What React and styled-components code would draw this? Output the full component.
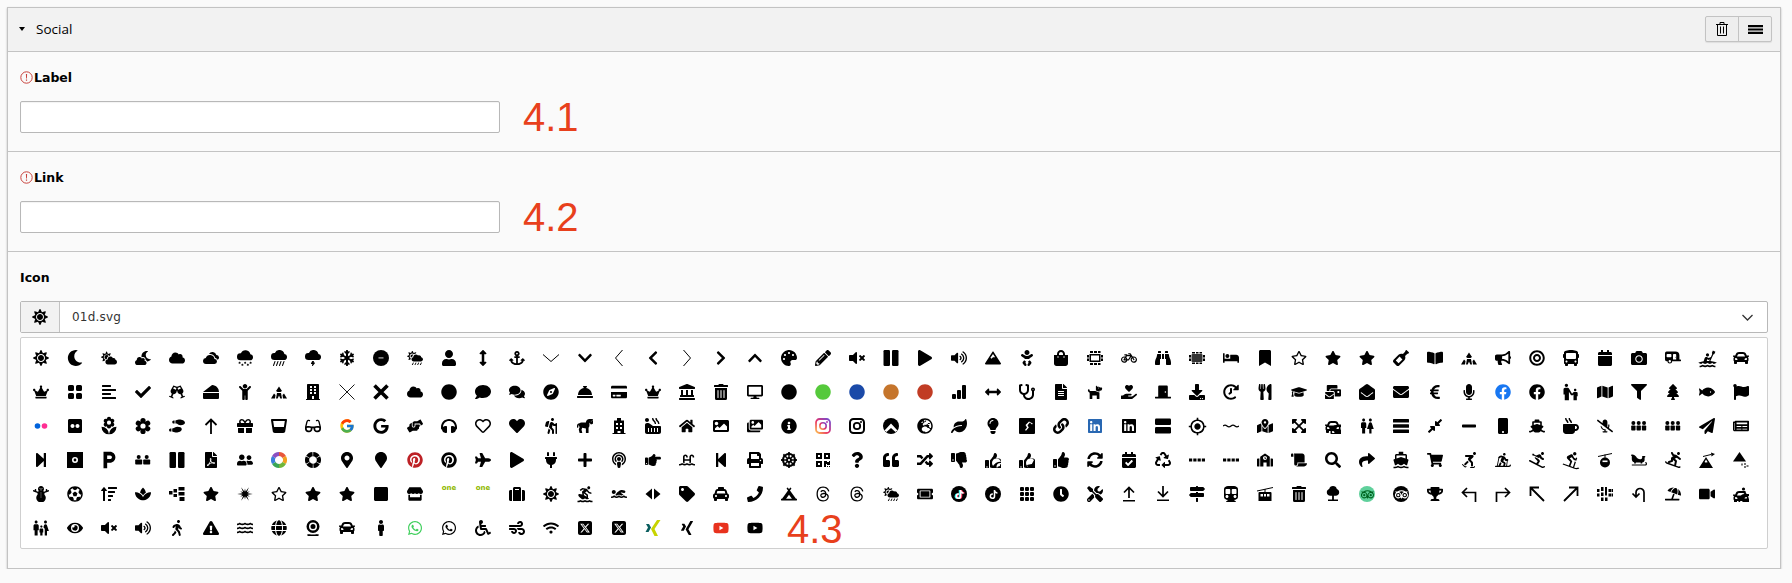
import React from "react";
import styled, { createGlobalStyle } from "styled-components";
import {
	FaAlignLeft, FaAnchor, FaArrowsAltH, FaArrowsAltV, FaBaby, FaBed, FaBicycle, FaBinoculars, FaBookmark,
	FaBookOpen, FaBuilding, FaBullhorn, FaBullseye, FaBus, FaCalendar, FaCalendarCheck, FaCamera, FaCampground,
	FaCar, FaCaravan, FaCheck, FaCheese, FaChevronDown, FaChevronLeft, FaChevronRight, FaChevronUp, FaChild, FaCircle,
	FaClock, FaCloud, FaCloudMoon, FaCloudSun, FaCloudSunRain, FaComment, FaComments, FaCompass, FaCompressAlt,
	FaConciergeBell, FaCreditCard, FaCrown, FaDesktop, FaDharmachakra, FaDog, FaDoorClosed, FaDownload,
	FaEnvelope, FaEnvelopeOpen, FaEuroSign, FaExclamationTriangle, FaExpandArrowsAlt, FaEye, FaFacebook, FaFileAlt,
	FaFilePdf, FaFilter, FaFish, FaFlag, FaFlickr, FaFutbol, FaGift, FaGlassCheers, FaGlasses, FaGlassWhiskey, FaGlobe,
	FaGlobeEurope, FaGoogle, FaGraduationCap, FaHandHoldingHeart, FaHandPointRight, FaHandsHelping, FaHeadphones,
	FaHeart, FaHiking, FaHistory, FaHome, FaHorse, FaHotTub, FaImage, FaImages, FaInfoCircle, FaLandmark,
	FaLeaf, FaLightbulb, FaLink, FaLinkedin, FaMailBulk, FaMale, FaMap, FaMapMarkedAlt, FaMapMarker, FaMapMarkerAlt,
	FaMapSigns, FaMicrophone, FaMicrophoneSlash, FaMinus, FaMobile, FaMoon, FaMountain, FaMugHot, FaNewspaper,
	FaPalette, FaPaperPlane, FaPencilAlt, FaPhone, FaPinterest, FaPlane, FaPlay, FaPlug, FaPlus, FaPodcast,
	FaPrint, FaQrcode, FaQuestion, FaQuoteLeft, FaRandom, FaRecycle, FaRegHeart, FaRegStar, FaSchool, FaScroll,
	FaSearch, FaShare, FaShip, FaShoePrints, FaShoppingBag, FaShoppingCart, FaSkating, FaSkiing, FaSkiingNordic,
	FaSleigh, FaSnowboarding, FaSnowflake, FaSnowman, FaSortAmountUp, FaSpa, FaSquare, FaStar, FaStepBackward,
	FaStepForward, FaStethoscope, FaStore, FaSubway, FaSuitcase, FaSun, FaSwimmer, FaSwimmingPool, FaSyncAlt, FaTag,
	FaTaxi, FaThumbsDown, FaThumbsUp, FaTicketAlt, FaTiktok, FaTools, FaTrashAlt, FaTree, FaTripadvisor,
	FaTrophy, FaUmbrellaBeach, FaUser, FaUserFriends, FaUtensils, FaVideo, FaVolumeMute, FaVolumeUp, FaWalking, FaWater,
	FaWhatsapp, FaWheelchair, FaWifi, FaWind, FaWineBottle, FaXing, FaYoutube,
} from "react-icons/fa";
import { FaThreads, FaSquareXTwitter } from "react-icons/fa6";
import { FcGoogle } from "react-icons/fc";
import { BsBarChartFill, BsCloudLightningFill, BsCloudRainHeavyFill, BsCloudsFill, BsCloudSnowFill, BsGrid3X3GapFill, BsGridFill } from "react-icons/bs";
import { MdDirectionsBoat, MdDownhillSkiing, MdEscalatorWarning, MdFamilyRestroom, MdGpsFixed, MdKayaking, MdLocalFlorist, MdLocalParking, MdSurfing, MdWc } from "react-icons/md";

const GlobalStyle = createGlobalStyle`
	html, body {
		margin: 0;
		background: #fafafa;
	}
	#root {
		padding: 7px 11px 0 7px;
	}
`;

const Panel = styled.div`
	background: #fafafa;
	border: 1px solid #c3c3c3;
	box-shadow: 0 1px 2px rgba(0, 0, 0, 0.25);
	font-family: "DejaVu Sans", Verdana, sans-serif;
	color: #000;
`;

const PanelHeader = styled.div`
	box-sizing: border-box;
	display: flex;
	align-items: center;
	height: 44px;
	padding: 0 8px 1px 11px;
	background: #f2f2f2;
	border-bottom: 1px solid #c3c3c3;
`;

const Caret = styled.span`
	width: 0;
	height: 0;
	border-left: 3.5px solid transparent;
	border-right: 3.5px solid transparent;
	border-top: 4px solid #000;
	margin-right: 11px;
`;

const Title = styled.span`
	flex: 1;
	font-family: "Open Sans", sans-serif;
	font-size: 13.5px;
`;

const ButtonGroup = styled.div`
	display: flex;
	height: 24px;
	border: 1px solid #c3c3c3;
	border-radius: 2px;
	background: #eeeeee;
	box-shadow: 0 1px 1px rgba(0, 0, 0, 0.08);
`;

const GroupButton = styled.div`
	display: flex;
	align-items: center;
	justify-content: center;
	width: 32px;
	border-left: ${({ $first }) => ($first ? "none" : "1px solid #c3c3c3")};
`;

const Section = styled.div`
	padding: 16px 12px ${({ $last }) => ($last ? "19px" : "18px")};
	border-bottom: ${({ $last }) => ($last ? "none" : "1px solid #c3c3c3")};
`;

const FieldLabel = styled.div`
	display: flex;
	align-items: center;
	height: 18px;
	margin-bottom: 15px;
	font-size: 12.5px;
	font-weight: bold;
`;

const WarnIcon = styled.svg`
	width: 13px;
	height: 13px;
	margin-right: 1px;
`;

const FieldRow = styled.div`
	display: flex;
	align-items: center;
	gap: 23px;
	height: 32px;
`;

const TextInput = styled.input`
	box-sizing: border-box;
	width: 480px;
	height: 32px;
	background: #fff;
	border: 1px solid #b8b8b8;
	border-radius: 2px;
	box-shadow: inset 0 1px 1px rgba(0, 0, 0, 0.05);
`;

const Annotation = styled.span`
	font-family: "Liberation Sans", Arial, sans-serif;
	font-size: 40px;
	line-height: 34px;
	color: #e8401c;
`;

const SelectBox = styled.div`
	display: flex;
	align-items: stretch;
	height: 30px;
	background: #fff;
	border: 1px solid #b8b8b8;
	border-radius: 2px;
`;

const SelectAddon = styled.div`
	display: flex;
	align-items: center;
	justify-content: center;
	width: 38px;
	font-size: 16px;
	background: #f2f2f2;
	border-right: 1px solid #c3c3c3;
`;

const SelectValue = styled.div`
	flex: 1;
	display: flex;
	align-items: center;
	padding-left: 12px;
	font-size: 12px;
	letter-spacing: 0.2px;
	color: #333;
`;

const SelectArrow = styled.div`
	display: flex;
	align-items: center;
	padding-right: 14px;
`;

const IconGrid = styled.div`
	display: flex;
	flex-wrap: wrap;
	margin-top: 4px;
	padding: 3px 3px 2px;
	background: #fff;
	border: 1px solid #cfcfcf;
	border-radius: 2px;
`;

const IconTile = styled.div`
	display: flex;
	align-items: center;
	justify-content: center;
	width: 34px;
	height: 34px;
	font-size: 16px;
	color: #000;
	svg {
		flex: none;
	}
`;

const GridNote = styled(Annotation)`
	height: 34px;
	margin-left: 15px;
	margin-top: 1px;
`;

const Round = styled.span`
	display: flex;
	align-items: center;
	justify-content: center;
	width: 16px;
	height: 16px;
	border-radius: 50%;
	font-size: ${({ $size }) => $size || 10}px;
	background: ${({ $bg }) => $bg};
	color: ${({ $fg }) => $fg};
`;

const TikTokMark = styled(FaTiktok)`
	filter: ${({ $tinted }) => ($tinted ? "drop-shadow(-1px 0 0 #25f4ee) drop-shadow(1px 0 0 #fe2c55)" : "none")};
`;

const OneMark = styled.span`
	margin-top: -12px;
	font-family: "DejaVu Sans", sans-serif;
	font-size: 7px;
	font-weight: bold;
	color: #8fb800;
`;

const GreenDot = styled(FaCircle)`color: #55c93b;`;
const BlueDot = styled(FaCircle)`color: #1b4aa8;`;
const OrangeDot = styled(FaCircle)`color: #c5752c;`;
const RedDot = styled(FaCircle)`color: #c13c24;`;
const FacebookBlue = styled(FaFacebook)`color: #1877f2;`;
const LinkedinBlue = styled(FaLinkedin)`color: #2867b2;`;
const PinterestRed = styled(FaPinterest)`color: #bd2126;`;
const WhatsappGreen = styled(FaWhatsapp)`color: #3fcf5c;`;
const YoutubeRed = styled(FaYoutube)`color: #e8321e;`;
const ClockArrow = styled(FaHistory)`transform: scaleX(-1);`;

// the material icons carry padding in their box, so they are drawn a bit larger
const scaled = (Icon, px = 20) => styled(Icon)`font-size: ${px}px;`;
const Florist = scaled(MdLocalFlorist);
const GpsFixed = scaled(MdGpsFixed, 19);
const Surfing = scaled(MdSurfing, 18);
const Jumper = scaled(MdDownhillSkiing);
const Boat = scaled(MdDirectionsBoat, 18);
const Restroom = scaled(MdWc, 18);
const ParentChild = scaled(MdEscalatorWarning, 20);
const Family = scaled(MdFamilyRestroom, 18);
const Parking = scaled(MdLocalParking, 22);
const Kayak = scaled(MdKayaking, 19);

const Svg = ({ children, ...rest }) => (
	<svg viewBox="0 0 16 16" width="1em" height="1em" fill="currentColor" {...rest}>
		{children}
	</svg>
);

const Line = ({ d, w = 1.6 }) => <path d={d} fill="none" stroke="currentColor" strokeWidth={w} />;

const arc = (r0, r1, a0, a1) => {
	const pt = (r, a) => `${(8 + r * Math.cos((a * Math.PI) / 180)).toFixed(2)} ${(8 + r * Math.sin((a * Math.PI) / 180)).toFixed(2)}`;
	return `M${pt(r0, a0)}A${r0} ${r0} 0 0 1 ${pt(r0, a1)}L${pt(r1, a1)}A${r1} ${r1} 0 0 0 ${pt(r1, a0)}Z`;
};

const burstPoints = Array.from({ length: 24 }, (_, i) => {
	const r = i % 2 ? 2.6 : i % 4 ? 5.5 : 7.8;
	const a = (i * Math.PI) / 12;
	return `${(8 + r * Math.cos(a)).toFixed(2)},${(8 + r * Math.sin(a)).toFixed(2)}`;
}).join(" ");

const stroked = (d, w) => () => (
	<Svg>
		<Line d={d} w={w} />
	</Svg>
);

const ThinDown = stroked("M0 4.5 8 11.5 16 4.5", 1);
const ThinLeft = stroked("M11.5 0 4.5 8 11.5 16", 1);
const ThinRight = stroked("M4.5 0 11.5 8 4.5 16", 1);
const ThinX = stroked("M.5.5 15.5 15.5M15.5.5.5 15.5", 0.9);
const BoldX = stroked("M1.5 1.5 14.5 14.5M14.5 1.5 1.5 14.5", 3.6);
const ArrowUpThin = stroked("M8 16V1.5M2.5 7 8 1.5 13.5 7", 1.8);
const ArrowUpLeft = stroked("M15 15 1.5 1.5M1.5 10V1.5H10", 1.8);
const ArrowUpRight = stroked("M1 15 14.5 1.5M14.5 10V1.5H6", 1.8);
const TurnLeft = stroked("M14.5 16V6.5H1.5M6 2 1.5 6.5 6 11", 1.7);
const TurnRight = stroked("M1.5 16V6.5h13M10 2l4.5 4.5L10 11", 1.7);
const UTurn = stroked("M13 16V6.5a4 4 0 0 0-8 0V11M1.5 7.5 5 11l3.5-3.5", 1.7);
const WaveLine = stroked("M0 8c1.3-1.2 2.7-1.2 4 0s2.700 1.200 4 0 2.700-1.200 4 0 2.700 1.200 4 0", 1.2);

const Disc360 = () => (
	<Svg>
		<circle cx="8" cy="8" r="8" />
		<rect x="5.5" y="7.3" width="5" height="1.2" fill="#fff" opacity="0.7" />
	</Svg>
);

const ChipTable = () => (
	<Svg>
		<path fillRule="evenodd" d="M2.5 4h11v8h-11ZM4 5.5v5h8v-5Z" />
		<path d="M3 1h3v2H3ZM7 1h3v2H7ZM11 1h2.5v2H11ZM3 13h3v2H3ZM7 13h3v2H7ZM11 13h2.5v2H11ZM0 5h2v2.5H0ZM0 8.5h2V11H0ZM14 5h2v2.5h-2ZM14 8.5h2V11h-2Z" />
	</Svg>
);

const ChipTableFilled = () => (
	<Svg>
		<rect x="2.5" y="4" width="11" height="8" rx="1" opacity="0.8" />
		<path d="M3 2h3v1.4H3ZM7 2h2.5v1.4H7ZM10.5 2H13v1.4h-2.5ZM3 12.6h3V14H3ZM7 12.6h2.5V14H7ZM10.5 12.6H13V14h-2.5ZM0 5h2v2.5H0ZM0 8.5h2V11H0ZM14 5h2v2.5h-2ZM14 8.5h2V11h-2Z" />
	</Svg>
);

const Bungalows = () => (
	<Svg>
		<path d="M8 2.5 11 7l-1.500 1h-3L5 7ZM6 9h4l1 5.500H9.300L8 11.500 6.700 14.500H5ZM3 9.500 4.500 11 4 14.500H0ZM13 9.500l3 5h-4L11.500 11Z" />
	</Svg>
);

const FlickrDots = () => (
	<Svg>
		<circle cx="4.5" cy="8" r="2.8" fill="#0063dc" />
		<circle cx="11.5" cy="8" r="2.8" fill="#ff2e92" />
	</Svg>
);

const HexFlower = () => (
	<Svg>
		{[0, 60, 120, 180, 240, 300].map((a) => (
			<circle key={a} cx="8" cy="2.6" r="2.6" transform={`rotate(${a} 8 8)`} />
		))}
		<circle cx="8" cy="8" r="5" />
		<circle cx="8" cy="8" r="2.6" fill="#fff" />
	</Svg>
);

const PeakCircle = () => (
	<Svg>
		<circle cx="8" cy="8" r="8" />
		<path d="M1.500 12.500 8 5.500l6.500 7-2 1.500L8 10l-4.500 4Z" fill="#fff" />
	</Svg>
);

const CrackSquare = () => (
	<Svg>
		<path fillRule="evenodd" d="M1 0h14a1 1 0 0 1 1 1v14a1 1 0 0 1-1 1H1a1 1 0 0 1-1-1V1a1 1 0 0 1 1-1Zm9 3.500L6.500 7 8 9.500 6 12l1 .8 2.800-3.300L8.500 7.200l2.300-2.800 2.200 2 .8-.9Z" />
	</Svg>
);

const TowerHotel = () => (
	<Svg>
		<path fillRule="evenodd" d="M6 0h4v2.500h3V15h1.500v1h-13v-1H3V2.500h3ZM5 5v2h2V5Zm4 0v2h2V5ZM5 9v2h2V9Zm4 0v2h2V9Zm-2.500 4v2h3v-2Z" />
	</Svg>
);

const TwoBarsH = () => (
	<Svg>
		<rect x="0" y="0.5" width="16" height="6.5" rx="1.2" />
		<rect x="0" y="9" width="16" height="6.5" rx="1.2" />
	</Svg>
);

const TwoBarsV = () => (
	<Svg>
		<rect x="0.5" y="0" width="6.5" height="16" rx="1.2" />
		<rect x="9" y="0" width="6.5" height="16" rx="1.2" />
	</Svg>
);

const ThreeBars = () => (
	<Svg>
		<rect x="0" y="1" width="16" height="3.4" rx="0.5" />
		<rect x="0" y="6.3" width="16" height="3.4" rx="0.5" />
		<rect x="0" y="11.6" width="16" height="3.4" rx="0.5" />
	</Svg>
);

const CarPair = () => (
	<Svg>
		<FaCar x="0" y="1" width="8" height="8" />
		<FaCar x="5" y="5" width="11" height="11" />
	</Svg>
);

const CarPeople = () => (
	<Svg>
		<FaCar x="0" y="3" width="7" height="7" />
		<FaCar x="5" y="6" width="11" height="11" />
		<circle cx="10.5" cy="3" r="1.6" />
		<path d="M8.500 5h4v1.200h-4Z" />
	</Svg>
);

const People = ({ count, top }) => {
	const step = 16 / count;
	return (
		<Svg>
			{Array.from({ length: count }, (_, i) => (
				<g key={i} transform={`translate(${i * step} ${top})`}>
					<circle cx={step / 2 - 0.3} cy="0" r="2" />
					<rect x="0.2" y="2.5" width={step - 1} height="5" rx="0.8" />
				</g>
			))}
		</Svg>
	);
};
const PeopleThree = () => <People count={3} top={5} />;
const PeopleTwo = () => <People count={2} top={5} />;

const OBox = () => (
	<Svg>
		<path fillRule="evenodd" d="M0 0h16v16H0ZM8 5a3 3 0 1 0 0 6 3 3 0 0 0 0-6Zm0 1.600a1.400 1.400 0 1 1 0 2.800 1.400 1.400 0 0 1 0-2.800Z" />
	</Svg>
);

const picasaColors = ["#e8563a", "#f2a01e", "#6fb63a", "#3aa655", "#3b7fd9", "#8a4fc1"];

const PicasaColor = () => (
	<Svg>
		{picasaColors.map((c, i) => (
			<path key={c} d={arc(8, 4, -90 + i * 60, -30 + i * 60)} fill={c} />
		))}
	</Svg>
);

const PicasaBlack = () => (
	<Svg>
		{picasaColors.map((c, i) => (
			<path key={c} d={arc(8, 3.8, -88 + i * 60, -34 + i * 60)} />
		))}
	</Svg>
);

const DashLine = () => (
	<Svg>
		<path d="M0 6.500h3.200v3H0ZM4.300 6.500h3.200v3H4.300ZM8.600 6.500h3.200v3H8.600ZM12.800 6.500H16v3h-3.200Z" />
	</Svg>
);

const SkiGondola = () => (
	<Svg>
		<Line w={1} d="M1 4.500 15 1.500" />
		<path d="M7.500 2.500h1V6h-1Z" />
		<circle cx="8" cy="10.5" r="5" />
		<rect x="5.5" y="8.5" width="5" height="1.6" fill="#fff" />
	</Svg>
);

const CableCar = () => (
	<Svg>
		<Line w={1} d="M0 5 16 1.500" />
		<path d="M7.500 3h1v3h-1Z" />
		<path fillRule="evenodd" d="M2.500 6h11a1 1 0 0 1 1 1v8h-13V7a1 1 0 0 1 1-1ZM3.500 8v2.500h2.500V8ZM7 8v2.500h2V8Zm3 0v2.500h2.500V8Z" />
	</Svg>
);

const Blocks = () => (
	<Svg>
		<path d="M0 5h3.500v3.500H0ZM4.500 3h3.500v3.500H4.500ZM4.500 8h3.500v3H4.500ZM9.500 1h6v3.500h-6ZM9.500 6h6v3.500h-6ZM10.500 11h5v4h-5Z" />
	</Svg>
);

const Burst = () => (
	<Svg>
		<polygon points={burstPoints} />
	</Svg>
);

const CaretsLR = () => (
	<Svg>
		<path d="M7 2.500v11L.5 8ZM9 2.500 15.500 8 9 13.500Z" />
	</Svg>
);

const UploadLine = () => (
	<Svg>
		<Line w={1.7} d="M8 12V1.500M3 6.500l5-5 5 5" />
		<path d="M2 14h12v1.500H2Z" />
	</Svg>
);

const DownloadLine = () => (
	<Svg>
		<Line w={1.7} d="M8 0v10.500M3 5.500l5 5 5-5" />
		<path d="M2 13.500h12V15H2Z" />
	</Svg>
);

const RoundTree = () => (
	<Svg>
		<path d="M8 0c2 0 3.500 1.300 3.800 3 1.400.4 2.400 1.600 2.400 3.200 0 2-1.600 3.500-3.500 3.500H8.900v3.800H13V15H3v-1.500h4.100V9.700H5.300c-1.900 0-3.500-1.500-3.500-3.500C1.800 4.600 2.800 3.400 4.200 3 4.500 1.300 6 0 8 0Z" />
	</Svg>
);

const DotGrid = () => (
	<Svg>
		<path d="M0 3h2.500v3H0ZM0 7.500h2.500v3H0ZM4 1h2.500v4H4ZM4 6.500h2.500v3.500H4ZM4 11.500h2.500V15H4ZM8 1h2v8.500H8ZM8 11.500h2.500V15H8ZM11.500 3H14v3h-2.500ZM11.500 7.500H14v3h-2.500ZM14.500 3H16v3h-1.500ZM14.500 7.500H16v3h-1.500Z" />
	</Svg>
);

const Webcam = () => (
	<Svg>
		<path fillRule="evenodd" d="M8 0a6.500 6.500 0 1 1 0 13A6.500 6.500 0 0 1 8 0Zm0 2.500a4 4 0 1 0 0 8 4 4 0 0 0 0-8Zm0 1.500a2.500 2.500 0 1 1 0 5 2.500 2.500 0 0 1 0-5Z" />
		<path d="M2.500 14c1 .3 3 .5 5.500.5s4.500-.2 5.500-.5v2h-11Z" />
	</Svg>
);

const MountainArrow = () => (
	<Svg>
		<path fillRule="evenodd" d="M7 5 14 16H0ZM7 7.500 5.500 10l1 .8.500-.8.800.8.800-.8Z" />
		<Line w={1} d="M4 4.500 12 2.500" />
		<path d="M12 .5 16 2l-3.500 2.500Z" />
	</Svg>
);

const MountainDots = () => (
	<Svg>
		<path d="M6.500 0 13 9.500H0Z" />
		<path d="M8 11.500h2v2H8ZM11 11h2v2h-2ZM13.500 13h2v2h-2ZM11 14h2v2h-2Z" opacity="0.55" />
	</Svg>
);

const ThumbEye = () => (
	<Svg>
		<FaThumbsUp x="0" y="1" width="12" height="12" />
		<circle cx="11.5" cy="11" r="4.5" fill="#fff" />
		<FaEye x="7.5" y="7" width="8" height="8" />
	</Svg>
);

const ThumbStar = () => (
	<Svg>
		<FaThumbsUp x="0" y="1" width="12" height="12" />
		<circle cx="11.5" cy="11" r="4.5" fill="#fff" />
		<FaStar x="7.5" y="7" width="8" height="8" />
	</Svg>
);

const InstagramBlack = () => (
	<Svg>
		<rect x="1" y="1" width="14" height="14" rx="3.5" fill="none" stroke="#000" strokeWidth="2" />
		<circle cx="8" cy="8" r="3.2" fill="none" stroke="#000" strokeWidth="1.8" />
		<circle cx="12" cy="4" r="1" />
	</Svg>
);

const InstagramColor = () => (
	<Svg>
		<defs>
			<linearGradient id="ig" x1="0" y1="1" x2="1" y2="0">
				<stop offset="0" stopColor="#fdc04f" />
				<stop offset="0.45" stopColor="#e8336a" />
				<stop offset="1" stopColor="#6a4fd8" />
			</linearGradient>
		</defs>
		<rect x="1" y="1" width="14" height="14" rx="3.5" fill="none" stroke="url(#ig)" strokeWidth="1.8" />
		<circle cx="8" cy="8" r="3.2" fill="none" stroke="url(#ig)" strokeWidth="1.6" />
		<circle cx="12" cy="4" r="1" fill="#b53fb0" />
	</Svg>
);

const XingColor = () => (
	<Svg>
		<path d="M1 4h3l2 3.500L3.500 12h-3L3 7.500Z" fill="#0a5d5e" />
		<path d="M12 0h3.500L9.500 9l3.500 7H9.500L6 9Z" fill="#c8d400" />
	</Svg>
);

const TikTokColor = () => (
	<Round $bg="#000" $fg="#fff" $size={9}>
		<TikTokMark $tinted />
	</Round>
);
const TikTokBlack = () => (
	<Round $bg="#000" $fg="#fff" $size={9}>
		<TikTokMark />
	</Round>
);
const TripGreen = () => (
	<Round $bg="#5fd09b" $fg="#062" $size={13}>
		<FaTripadvisor />
	</Round>
);
const TripBlack = () => (
	<Round $bg="#000" $fg="#fff" $size={13}>
		<FaTripadvisor />
	</Round>
);
const One = () => <OneMark>one</OneMark>;

const ICONS = [
	// row 1
	FaSun, FaMoon, FaCloudSun, FaCloudMoon, FaCloud, BsCloudsFill, BsCloudSnowFill, BsCloudRainHeavyFill, BsCloudLightningFill,
	FaSnowflake, Disc360, FaCloudSunRain, FaUser, FaArrowsAltV, FaAnchor, ThinDown, FaChevronDown, ThinLeft,
	FaChevronLeft, ThinRight, FaChevronRight, FaChevronUp, FaPalette, FaPencilAlt, FaVolumeMute, TwoBarsV, FaPlay,
	FaVolumeUp, FaMountain, FaBaby, FaShoppingBag, ChipTable, FaBicycle, FaBinoculars, ChipTableFilled, FaBed, FaBookmark,
	FaRegStar, FaStar, FaStar, FaWineBottle, FaBookOpen, Bungalows, FaBullhorn, FaBullseye, FaBus, FaCalendar, FaCamera,
	FaCaravan, Kayak, FaCar,
	// row 2
	FaCrown, BsGridFill, FaAlignLeft, FaCheck, FaGlassCheers, FaCheese, FaChild, Bungalows, FaBuilding, ThinX, BoldX,
	FaCloud, FaCircle, FaComment, FaComments, FaCompass, FaConciergeBell, FaCreditCard, FaCrown, FaLandmark, FaTrashAlt,
	FaDesktop, FaCircle, GreenDot, BlueDot, OrangeDot, RedDot, BsBarChartFill, FaArrowsAltH, FaStethoscope, FaFileAlt, FaDog,
	FaHandHoldingHeart, FaDoorClosed, FaDownload, ClockArrow, FaUtensils, FaGraduationCap, FaMailBulk, FaEnvelopeOpen,
	FaEnvelope, FaEuroSign, FaMicrophone, FacebookBlue, FaFacebook, ParentChild, FaMap, FaFilter, FaTree, FaFish, FaFlag,
	// row 3
	FlickrDots, FaFlickr, Florist, HexFlower, FaShoePrints, ArrowUpThin, FaGift, FaGlassWhiskey, FaGlasses, FcGoogle,
	FaGoogle, FaHandsHelping, FaHeadphones, FaRegHeart, FaHeart, FaHiking, FaHorse, TowerHotel, FaHotTub, FaHome, FaImage, FaImages,
	FaInfoCircle, InstagramColor, InstagramBlack, PeakCircle, FaGlobeEurope, FaLeaf, FaLightbulb, CrackSquare, FaLink, LinkedinBlue,
	FaLinkedin, TwoBarsH, GpsFixed, WaveLine, FaMapMarkedAlt, FaExpandArrowsAlt, CarPair, Restroom, ThreeBars, FaCompressAlt, FaMinus,
	FaMobile, FaShip, FaMugHot, FaMicrophoneSlash, PeopleThree, PeopleThree, FaPaperPlane, FaNewspaper,
	// row 4
	FaStepForward, OBox, Parking, PeopleTwo, TwoBarsV, FaFilePdf, FaUserFriends, PicasaColor, PicasaBlack, FaMapMarkerAlt,
	FaMapMarker, PinterestRed, FaPinterest, FaPlane, FaPlay, FaPlug, FaPlus, FaPodcast, FaHandPointRight, FaSwimmingPool,
	FaStepBackward, FaPrint, FaDharmachakra, FaQrcode, FaQuestion, FaQuoteLeft, FaRandom, FaThumbsDown, ThumbEye, ThumbStar,
	FaThumbsUp, FaSyncAlt, FaCalendarCheck, FaRecycle, DashLine, DashLine, FaSchool, FaScroll, FaSearch, FaShare, Boat,
	FaShoppingCart, FaSkating, FaSkiingNordic, FaSkiing, Jumper, SkiGondola, FaSleigh, FaSnowboarding, MountainArrow,
	MountainDots,
	// row 5
	FaSnowman, FaFutbol, FaSortAmountUp, FaSpa, Blocks, FaStar, Burst, FaRegStar, FaStar, FaStar, FaSquare, FaStore, One, One,
	FaSuitcase, FaSun, Surfing, FaSwimmer, CaretsLR, FaTag, FaTaxi, FaPhone, FaCampground, FaThreads, FaThreads, FaCloudSunRain,
	FaTicketAlt, TikTokColor, TikTokBlack, BsGrid3X3GapFill, FaClock, FaTools, UploadLine, DownloadLine, FaMapSigns, FaSubway,
	CableCar, FaTrashAlt, RoundTree, TripGreen, TripBlack, FaTrophy, TurnLeft, TurnRight, ArrowUpLeft, ArrowUpRight, DotGrid,
	UTurn, FaUmbrellaBeach, FaVideo, CarPeople,
	// row 6
	Family, FaEye, FaVolumeMute, FaVolumeUp, FaWalking, FaExclamationTriangle, FaWater, FaGlobe, Webcam, FaCar, FaMale,
	WhatsappGreen, FaWhatsapp, FaWheelchair, FaWind, FaWifi, FaSquareXTwitter, FaSquareXTwitter, XingColor, FaXing, YoutubeRed, FaYoutube,
];

const Warning = () => (
	<WarnIcon viewBox="0 0 13 13">
		<circle cx="6.5" cy="6.5" r="5.7" fill="none" stroke="#c8423c" strokeWidth="1" />
		<path d="M5.9 3h1.200l-.2 4.500h-.8ZM5.900 8.500h1.200v1.300H5.900Z" fill="#c8423c" />
	</WarnIcon>
);

const TrashOutline = () => (
	<svg viewBox="0 0 12 14" width="12" height="14" fill="none" stroke="#000" strokeWidth="1">
		<path d="M0 2.500h12M4 2.500V.5h4v2M1.500 2.500v11h9v-11M4.500 4.500v7M7.500 4.500v7" />
	</svg>
);

const BarsThick = () => (
	<svg viewBox="0 0 15 9" width="15" height="9">
		<path d="M0 0h15v2.200H0ZM0 3.400h15v2.200H0ZM0 6.800h15V9H0Z" />
	</svg>
);

const SelectChevron = () => (
	<svg viewBox="0 0 11 7" width="11" height="7" fill="none" stroke="#333" strokeWidth="1.3">
		<path d="M.5 1 5.500 6l5-5" />
	</svg>
);

const TextField = ({ label, note }) => (
	<Section>
		<FieldLabel>
			<Warning />
			{label}
		</FieldLabel>
		<FieldRow>
			<TextInput type="text" />
			<Annotation>{note}</Annotation>
		</FieldRow>
	</Section>
);

const App = () => (
	<>
		<GlobalStyle />
		<Panel>
			<PanelHeader>
				<Caret />
				<Title>Social</Title>
				<ButtonGroup>
					<GroupButton $first>
						<TrashOutline />
					</GroupButton>
					<GroupButton>
						<BarsThick />
					</GroupButton>
				</ButtonGroup>
			</PanelHeader>
			<TextField label="Label" note="4.1" />
			<TextField label="Link" note="4.2" />
			<Section $last>
				<FieldLabel>Icon</FieldLabel>
				<SelectBox>
					<SelectAddon>
						<FaSun />
					</SelectAddon>
					<SelectValue>01d.svg</SelectValue>
					<SelectArrow>
						<SelectChevron />
					</SelectArrow>
				</SelectBox>
				<IconGrid>
					{ICONS.map((Icon, i) => (
						<IconTile key={i}>
							<Icon />
						</IconTile>
					))}
					<GridNote>4.3</GridNote>
				</IconGrid>
			</Section>
		</Panel>
	</>
);

export default App;
